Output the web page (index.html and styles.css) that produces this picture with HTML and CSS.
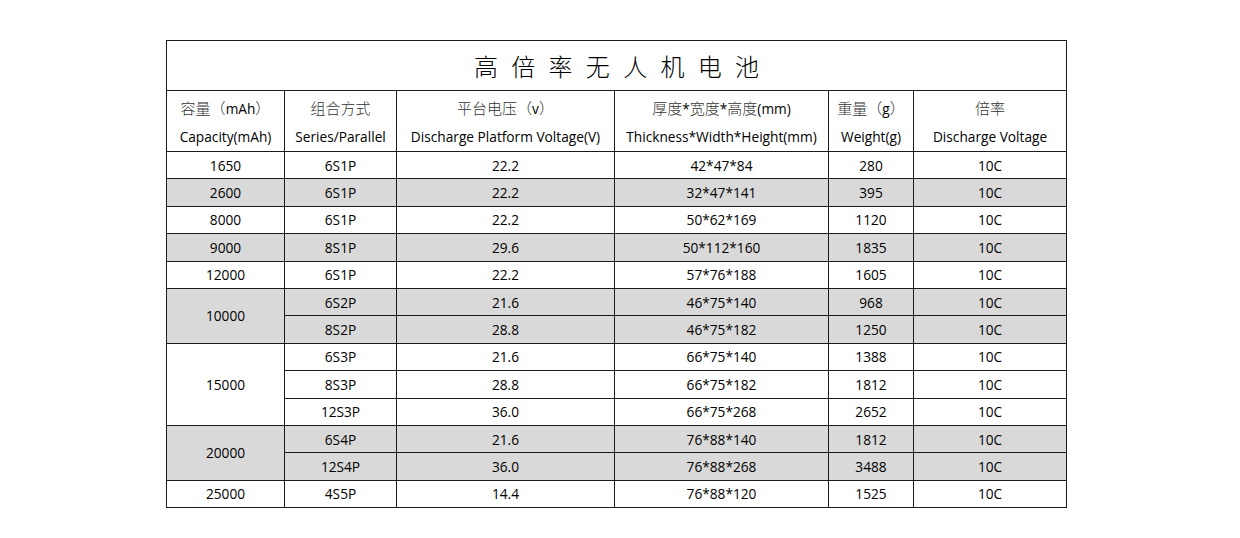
FILE: index.html
```html
<!DOCTYPE html>
<html lang="zh-CN">
<head>
<meta charset="utf-8">
<link rel="stylesheet" href="styles.css">
<title>高倍率无人机电池</title>
</head>
<body>
<div class="page">
<table class="spec">
  <colgroup>
    <col class="c1"><col class="c2"><col class="c3"><col class="c4"><col class="c5"><col class="c6">
  </colgroup>
  <tr class="title-row"><td colspan="6" class="title">高 倍 率 无 人 机 电 池</td></tr>
  <tr class="head-row">
    <td><span class="zh">容量（</span>mAh<span class="zh">）</span><br>Capacity(mAh)</td>
    <td><span class="zh">组合方式</span><br>Series/Parallel</td>
    <td><span class="zh">平台电压（</span>v<span class="zh">）</span><br>Discharge Platform Voltage(V)</td>
    <td><span class="zh">厚度</span>*<span class="zh">宽度</span>*<span class="zh">高度</span>(mm)<br>Thickness*Width*Height(mm)</td>
    <td><span class="zh">重量（</span>g<span class="zh">）</span><br>Weight(g)</td>
    <td><span class="zh">倍率</span><br>Discharge Voltage</td>
  </tr>
  <tr><td>1650</td><td>6S1P</td><td>22.2</td><td>42*47*84</td><td>280</td><td>10C</td></tr>
  <tr class="g"><td>2600</td><td>6S1P</td><td>22.2</td><td>32*47*141</td><td>395</td><td>10C</td></tr>
  <tr><td>8000</td><td>6S1P</td><td>22.2</td><td>50*62*169</td><td>1120</td><td>10C</td></tr>
  <tr class="g"><td>9000</td><td>8S1P</td><td>29.6</td><td>50*112*160</td><td>1835</td><td>10C</td></tr>
  <tr><td>12000</td><td>6S1P</td><td>22.2</td><td>57*76*188</td><td>1605</td><td>10C</td></tr>
  <tr class="g"><td rowspan="2">10000</td><td>6S2P</td><td>21.6</td><td>46*75*140</td><td>968</td><td>10C</td></tr>
  <tr class="g"><td>8S2P</td><td>28.8</td><td>46*75*182</td><td>1250</td><td>10C</td></tr>
  <tr><td rowspan="3">15000</td><td>6S3P</td><td>21.6</td><td>66*75*140</td><td>1388</td><td>10C</td></tr>
  <tr><td>8S3P</td><td>28.8</td><td>66*75*182</td><td>1812</td><td>10C</td></tr>
  <tr><td>12S3P</td><td>36.0</td><td>66*75*268</td><td>2652</td><td>10C</td></tr>
  <tr class="g"><td rowspan="2">20000</td><td>6S4P</td><td>21.6</td><td>76*88*140</td><td>1812</td><td>10C</td></tr>
  <tr class="g"><td>12S4P</td><td>36.0</td><td>76*88*268</td><td>3488</td><td>10C</td></tr>
  <tr><td>25000</td><td>4S5P</td><td>14.4</td><td>76*88*120</td><td>1525</td><td>10C</td></tr>
</table>
</div>
</body>
</html>
```
FILE: styles.css
```css
html, body {
  margin: 0;
  padding: 0;
  background: #ffffff;
}
.page {
  padding: 40px 0 0 166px;
}
.spec {
  border-collapse: collapse;
  table-layout: fixed;
  width: 900px;
  font-family: "Open Sans", "Noto Sans CJK SC", sans-serif;
  font-size: 13.7px;
  color: #000;
}
.c1 { width: 118px; }
.c2 { width: 112px; }
.c3 { width: 218px; }
.c4 { width: 214px; }
.c5 { width: 85px; }
.c6 { width: 153px; }
.spec td {
  border: 1px solid #1a1a1a;
  text-align: center;
  vertical-align: middle;
  padding: 1px 0 0 0;
  height: 25.4px;
  line-height: 16px;
  white-space: nowrap;
}
.spec tr.g td {
  background: #d9d9d9;
}
.spec .title-row td {
  height: 49px;
  font-family: "Noto Sans CJK SC", sans-serif;
  font-weight: 300;
  font-size: 24px;
  letter-spacing: 4px;
  color: #000;
  padding: 0 0 0 4px;
}
.spec .head-row td {
  height: 58px;
  padding-top: 2px;
  line-height: 28px;
}
.zh {
  font-family: "Noto Sans CJK SC", sans-serif;
  font-weight: 300;
  font-size: 15px;
  color: #333;
}
```
